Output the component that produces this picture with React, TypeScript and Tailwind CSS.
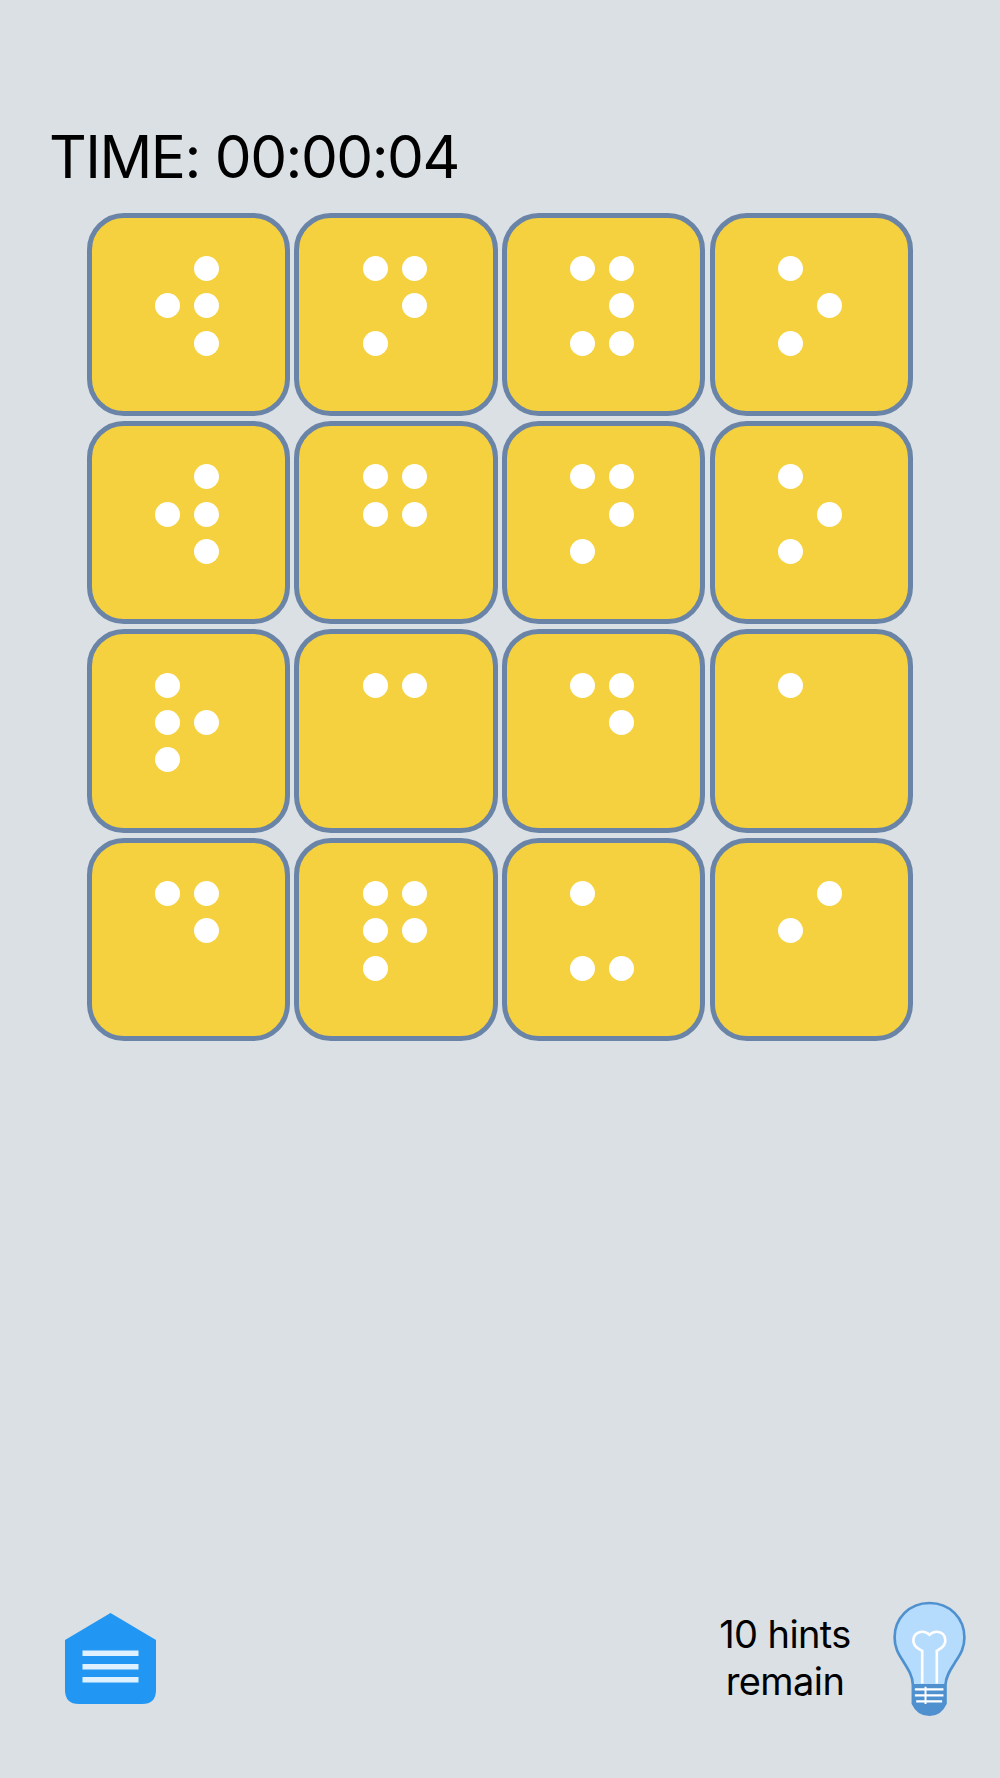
import React from "react";

// braille dots: l/r column + row number
const cells = [
  ["r1", "l2", "r2", "r3"],
  ["l1", "r1", "r2", "l3"],
  ["l1", "r1", "r2", "l3", "r3"],
  ["l1", "r2", "l3"],
  ["r1", "l2", "r2", "r3"],
  ["l1", "r1", "l2", "r2"],
  ["l1", "r1", "r2", "l3"],
  ["l1", "r2", "l3"],
  ["l1", "l2", "r2", "l3"],
  ["l1", "r1"],
  ["l1", "r1", "r2"],
  ["l1"],
  ["l1", "r1", "r2"],
  ["l1", "r1", "l2", "r2", "l3"],
  ["l1", "l3", "r3"],
  ["r1", "l2"],
];

const slots = ["l1", "r1", "l2", "r2", "l3", "r3"];

function Tile({ dots }: { dots: string[] }) {
  return (
    <div className="h-[203.3px] rounded-[37px] border-[5.5px] border-[#6a84a8] bg-[#f5d13f] pl-[63.4px] pt-[38.4px]">
      <div className="grid grid-cols-[repeat(2,25px)] grid-rows-[repeat(3,25px)] gap-x-[14px] gap-y-[12.3px]">
        {slots.map((s) => (
          <div key={s} className={dots.includes(s) ? "rounded-full bg-white" : ""} />
        ))}
      </div>
    </div>
  );
}

function HomeIcon() {
  return (
    <svg width="91" height="91" viewBox="0 0 91 91" className="block">
      <path
        d="M45.5 0 L91 27 V77 Q91 91 77 91 H14 Q0 91 0 77 V27 Z"
        fill="#2196f3"
      />
      <rect x="17.5" y="37.5" width="56" height="5.5" fill="#dff1fe" />
      <rect x="17.5" y="51" width="56" height="5.5" fill="#dff1fe" />
      <rect x="17.5" y="64" width="56" height="5.5" fill="#dff1fe" />
    </svg>
  );
}

function BulbIcon() {
  return (
    <svg width="87" height="123" viewBox="560 20 260 370" className="block">
      <path
        d="M690 38 C628 38 585 85 585 142 C585 172 596 190 610 212 C624 234 640 258 640 285 V340 C650 362 668 374 690 374 C712 374 728 362 738 340 V285 C738 258 756 234 770 212 C784 190 795 172 795 142 C795 85 752 38 690 38 Z"
        fill="#b5dbfd"
        stroke="#4f90cf"
        strokeWidth="8"
      />
      <path
        d="M668 280 V182 C650 174 638 162 642 145 C647 123 675 118 690 134 C705 118 733 123 737 145 C741 162 728 174 712 182 V280"
        fill="none"
        stroke="#ffffff"
        strokeWidth="8"
      />
      <path d="M640 282 H738 V342 C728 362 712 374 690 374 C668 374 650 362 640 342 Z" fill="#4f90cf" />
      <path d="M646 298 H732 M646 316 H732 M650 334 H728" stroke="#ffffff" strokeWidth="7" fill="none" />
      <path d="M678 290 V342" stroke="#ffffff" strokeWidth="6" fill="none" />
    </svg>
  );
}

export default function App() {
  return (
    <div className="flex h-[1778px] flex-col bg-[#dae0e3] font-['Inter',sans-serif] text-black">
      <div className="pl-[49px] pt-[122px] text-[58.5px] leading-[70px] font-normal tracking-[-1.5px]">TIME: 00:00:04</div>

      <div className="ml-[86.5px] mt-[20.7px] grid w-[826px] grid-cols-[repeat(4,203.5px)] gap-x-[4.2px] gap-y-[5px]">
        {cells.map((dots, i) => (
          <Tile key={i} dots={dots} />
        ))}
      </div>

      <div className="mt-auto flex items-center justify-between pb-[58px] pl-[64.5px] pr-[27px]">
        <HomeIcon />
        <div className="flex items-center gap-[26px]">
          <div className="w-[150px] -translate-y-[1px] text-center text-[38px] leading-[47px] font-normal tracking-[-0.6px]">
            10 hints
            <br />
            remain
          </div>
          <BulbIcon />
        </div>
      </div>
    </div>
  );
}
